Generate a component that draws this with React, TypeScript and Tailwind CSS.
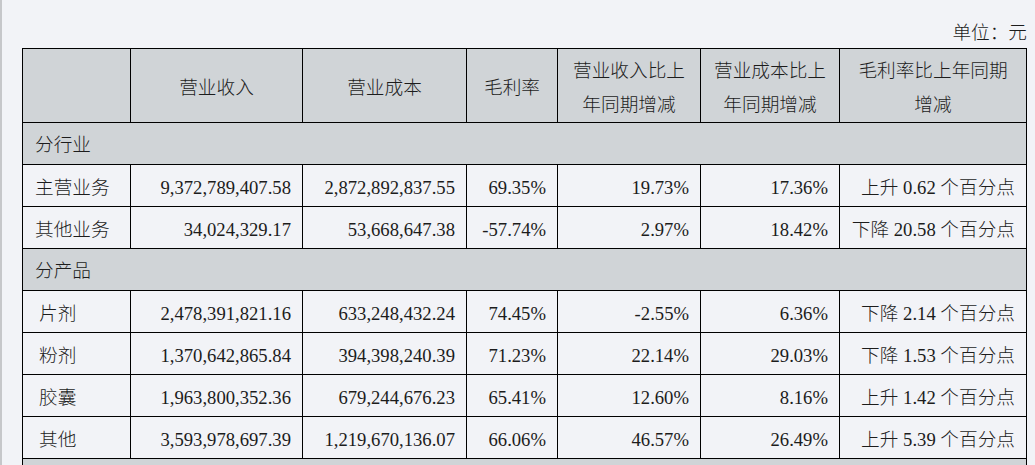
const industryRows = [
  ["主营业务", "9,372,789,407.58", "2,872,892,837.55", "69.35%", "19.73%", "17.36%", "上升 0.62 个百分点"],
  ["其他业务", "34,024,329.17", "53,668,647.38", "-57.74%", "2.97%", "18.42%", "下降 20.58 个百分点"],
];

const productRows = [
  ["片剂", "2,478,391,821.16", "633,248,432.24", "74.45%", "-2.55%", "6.36%", "下降 2.14 个百分点"],
  ["粉剂", "1,370,642,865.84", "394,398,240.39", "71.23%", "22.14%", "29.03%", "下降 1.53 个百分点"],
  ["胶囊", "1,963,800,352.36", "679,244,676.23", "65.41%", "12.60%", "8.16%", "上升 1.42 个百分点"],
  ["其他", "3,593,978,697.39", "1,219,670,136.07", "66.06%", "46.57%", "26.49%", "上升 5.39 个百分点"],
];

function DataRow({ row, indent }: { row: string[]; indent?: boolean }) {
  return (
    <tr className="h-[42px]">
      <td className={`border border-black pt-[5px] align-middle ${indent ? "pl-[16px]" : "pl-[12px]"}`}>{row[0]}</td>
      {row.slice(1).map((v, i) => (
        <td key={i} className="border border-black pt-[5px] pr-[11px] text-right align-middle whitespace-nowrap">
          {v}
        </td>
      ))}
    </tr>
  );
}

function GroupRow({ label }: { label: string }) {
  return (
    <tr className="h-[42px] bg-[#d0d4d7]">
      <td colSpan={7} className="border border-black pl-[12px] pt-[3px] align-middle">
        {label}
      </td>
    </tr>
  );
}

export default function App() {
  return (
    <div className="h-screen overflow-hidden bg-[#f2f3f7] border-l-2 border-[#c6c7ca] text-[#1c1c1c] font-['Liberation_Serif','Noto_Sans_CJK_SC',serif] font-light text-[18.67px]">
      {/* section title, scrolled mostly out of view */}
      <div className="-mt-[22px] h-[24px] pl-[18px] leading-[24px] text-[#555] whitespace-nowrap">
        二、主营业务 <span className="text-[#d02020]">分行业</span> 分产品
      </div>

      <div className="pr-[8px] text-right leading-[24px] mt-[19px]">单位：元</div>

      <table className="ml-[20px] mt-[3px] table-fixed border-collapse w-[1004px]">
        <colgroup>
          <col className="w-[108px]" />
          <col className="w-[172px]" />
          <col className="w-[164px]" />
          <col className="w-[91px]" />
          <col className="w-[143px]" />
          <col className="w-[139px]" />
          <col className="w-[187px]" />
        </colgroup>
        <thead>
          <tr className="h-[74px] bg-[#d0d4d7] leading-[34px]">
            <th className="border border-black font-light"></th>
            <th className="border border-black font-light pt-[4px]">营业收入</th>
            <th className="border border-black font-light pt-[4px]">营业成本</th>
            <th className="border border-black font-light pt-[4px]">毛利率</th>
            <th className="border border-black font-light pt-[4px]">
              营业收入比上
              <br />
              年同期增减
            </th>
            <th className="border border-black font-light pt-[4px]">
              营业成本比上
              <br />
              年同期增减
            </th>
            <th className="border border-black font-light pt-[4px]">
              毛利率比上年同期
              <br />
              增减
            </th>
          </tr>
        </thead>
        <tbody>
          <GroupRow label="分行业" />
          {industryRows.map((r) => (
            <DataRow key={r[0]} row={r} />
          ))}
          <GroupRow label="分产品" />
          {productRows.map((r) => (
            <DataRow key={r[0]} row={r} indent />
          ))}
          <GroupRow label="分地区" />
        </tbody>
      </table>
    </div>
  );
}
